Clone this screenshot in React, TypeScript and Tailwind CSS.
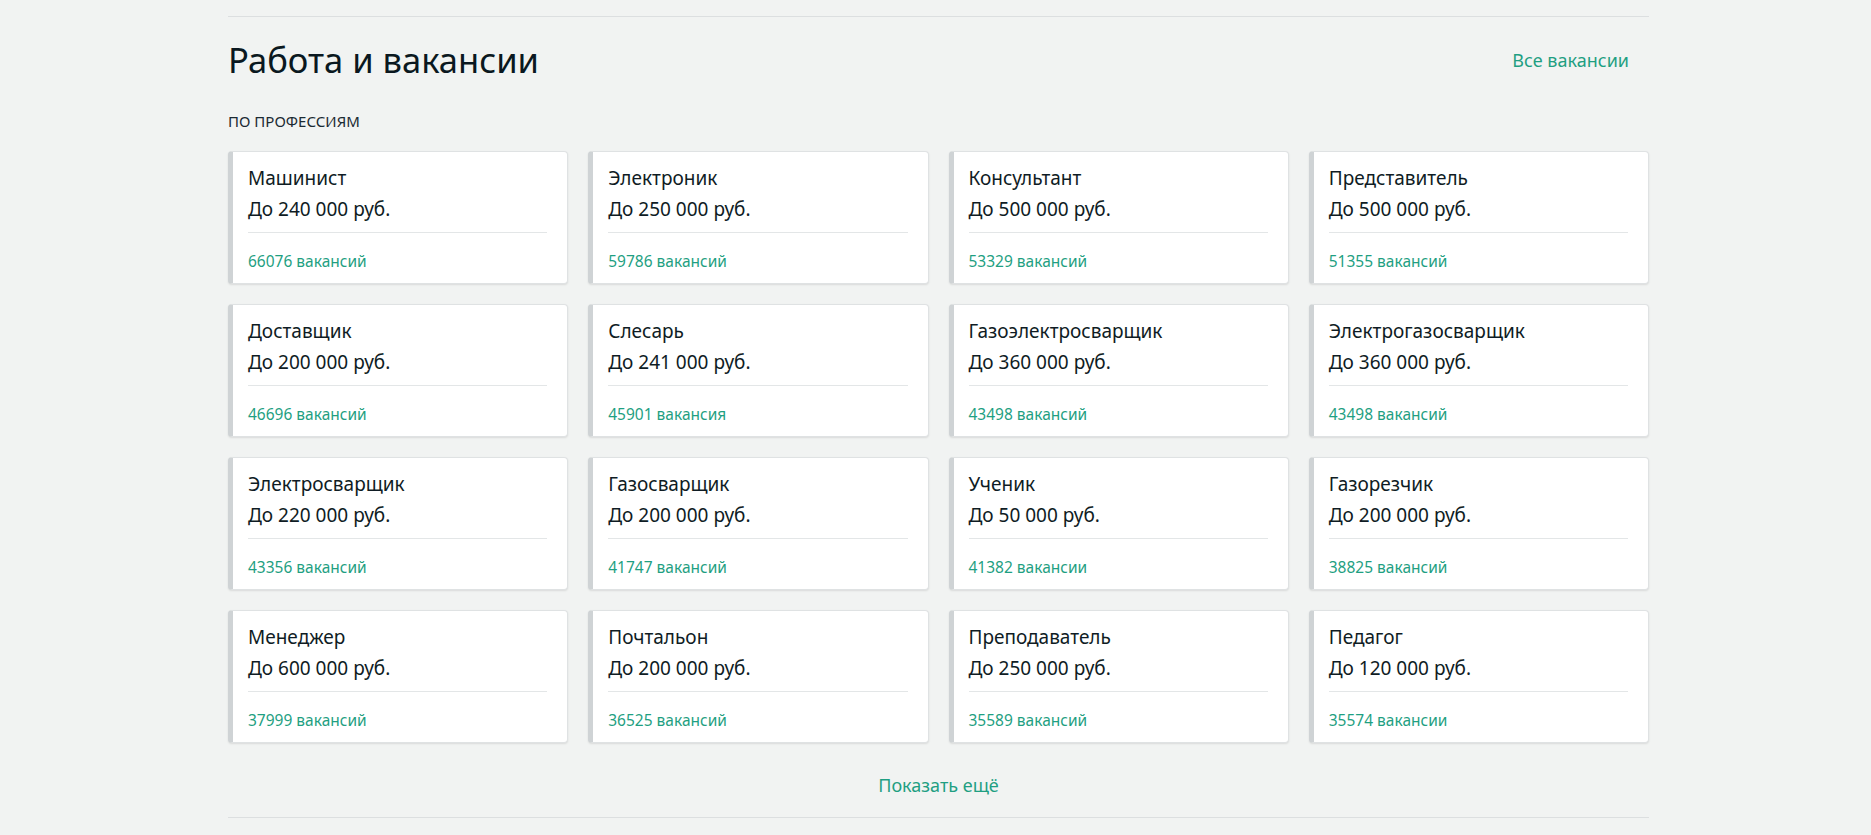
import React from "react";

const jobs = [
  { title: "Машинист", salary: "До 240 000 руб.", count: "66076 вакансий" },
  { title: "Электроник", salary: "До 250 000 руб.", count: "59786 вакансий" },
  { title: "Консультант", salary: "До 500 000 руб.", count: "53329 вакансий" },
  { title: "Представитель", salary: "До 500 000 руб.", count: "51355 вакансий" },
  { title: "Доставщик", salary: "До 200 000 руб.", count: "46696 вакансий" },
  { title: "Слесарь", salary: "До 241 000 руб.", count: "45901 вакансия" },
  { title: "Газоэлектросварщик", salary: "До 360 000 руб.", count: "43498 вакансий" },
  { title: "Электрогазосварщик", salary: "До 360 000 руб.", count: "43498 вакансий" },
  { title: "Электросварщик", salary: "До 220 000 руб.", count: "43356 вакансий" },
  { title: "Газосварщик", salary: "До 200 000 руб.", count: "41747 вакансий" },
  { title: "Ученик", salary: "До 50 000 руб.", count: "41382 вакансии" },
  { title: "Газорезчик", salary: "До 200 000 руб.", count: "38825 вакансий" },
  { title: "Менеджер", salary: "До 600 000 руб.", count: "37999 вакансий" },
  { title: "Почтальон", salary: "До 200 000 руб.", count: "36525 вакансий" },
  { title: "Преподаватель", salary: "До 250 000 руб.", count: "35589 вакансий" },
  { title: "Педагог", salary: "До 120 000 руб.", count: "35574 вакансии" },
];

function JobCard({ title, salary, count }: { title: string; salary: string; count: string }) {
  return (
    <a
      href="#"
      className="block h-[133px] rounded-[4px] border border-[#dfe2e3] border-l-[5px] border-l-[#cfd3d5] bg-white pl-[15px] pr-5 pt-[13px] shadow-[0_1px_2px_rgba(0,0,0,0.10)]"
    >
      <div className="text-[19px] leading-[26px] text-[#0f1c24]">{title}</div>
      <div className="mt-[2px] text-[19px] leading-[32px] text-[#0f1c24]">{salary}</div>
      <div className="mt-[7px] h-px bg-[#e3e6e7]" />
      <div className="mt-[18px] text-[15.5px] leading-[20px] text-[#1f9f82]">{count}</div>
    </a>
  );
}

export default function App() {
  return (
    <div
      className="min-h-screen bg-[#f1f3f2] pt-4"
      style={{ fontFamily: '"Noto Sans", "Open Sans", sans-serif' }}
    >
      <section className="ml-[228px] w-[1421px] border-t border-[#dcdfe0]">
        <div className="mt-[23px] flex items-center justify-between">
          <h2 className="text-[34.5px] leading-[40px] font-normal text-[#0a1820]">Работа и вакансии</h2>
          <a href="#" className="pr-5 text-[18px] leading-[28px] text-[#1f9f82]">
            Все вакансии
          </a>
        </div>
        <div className="mt-[31px] text-[15px] leading-[20px] uppercase text-[#1b2a32]">
          По профессиям
        </div>
        <div className="mt-5 grid grid-cols-4 gap-x-5 gap-y-[20px]">
          {jobs.map((j) => (
            <JobCard key={j.title} {...j} />
          ))}
        </div>
        <div className="mt-[28px] flex justify-center">
          <button className="text-[18px] leading-[28px] text-[#1f9f82]">Показать ещё</button>
        </div>
        <div className="mt-[18px] border-b border-[#dcdfe0]" />
      </section>
    </div>
  );
}
